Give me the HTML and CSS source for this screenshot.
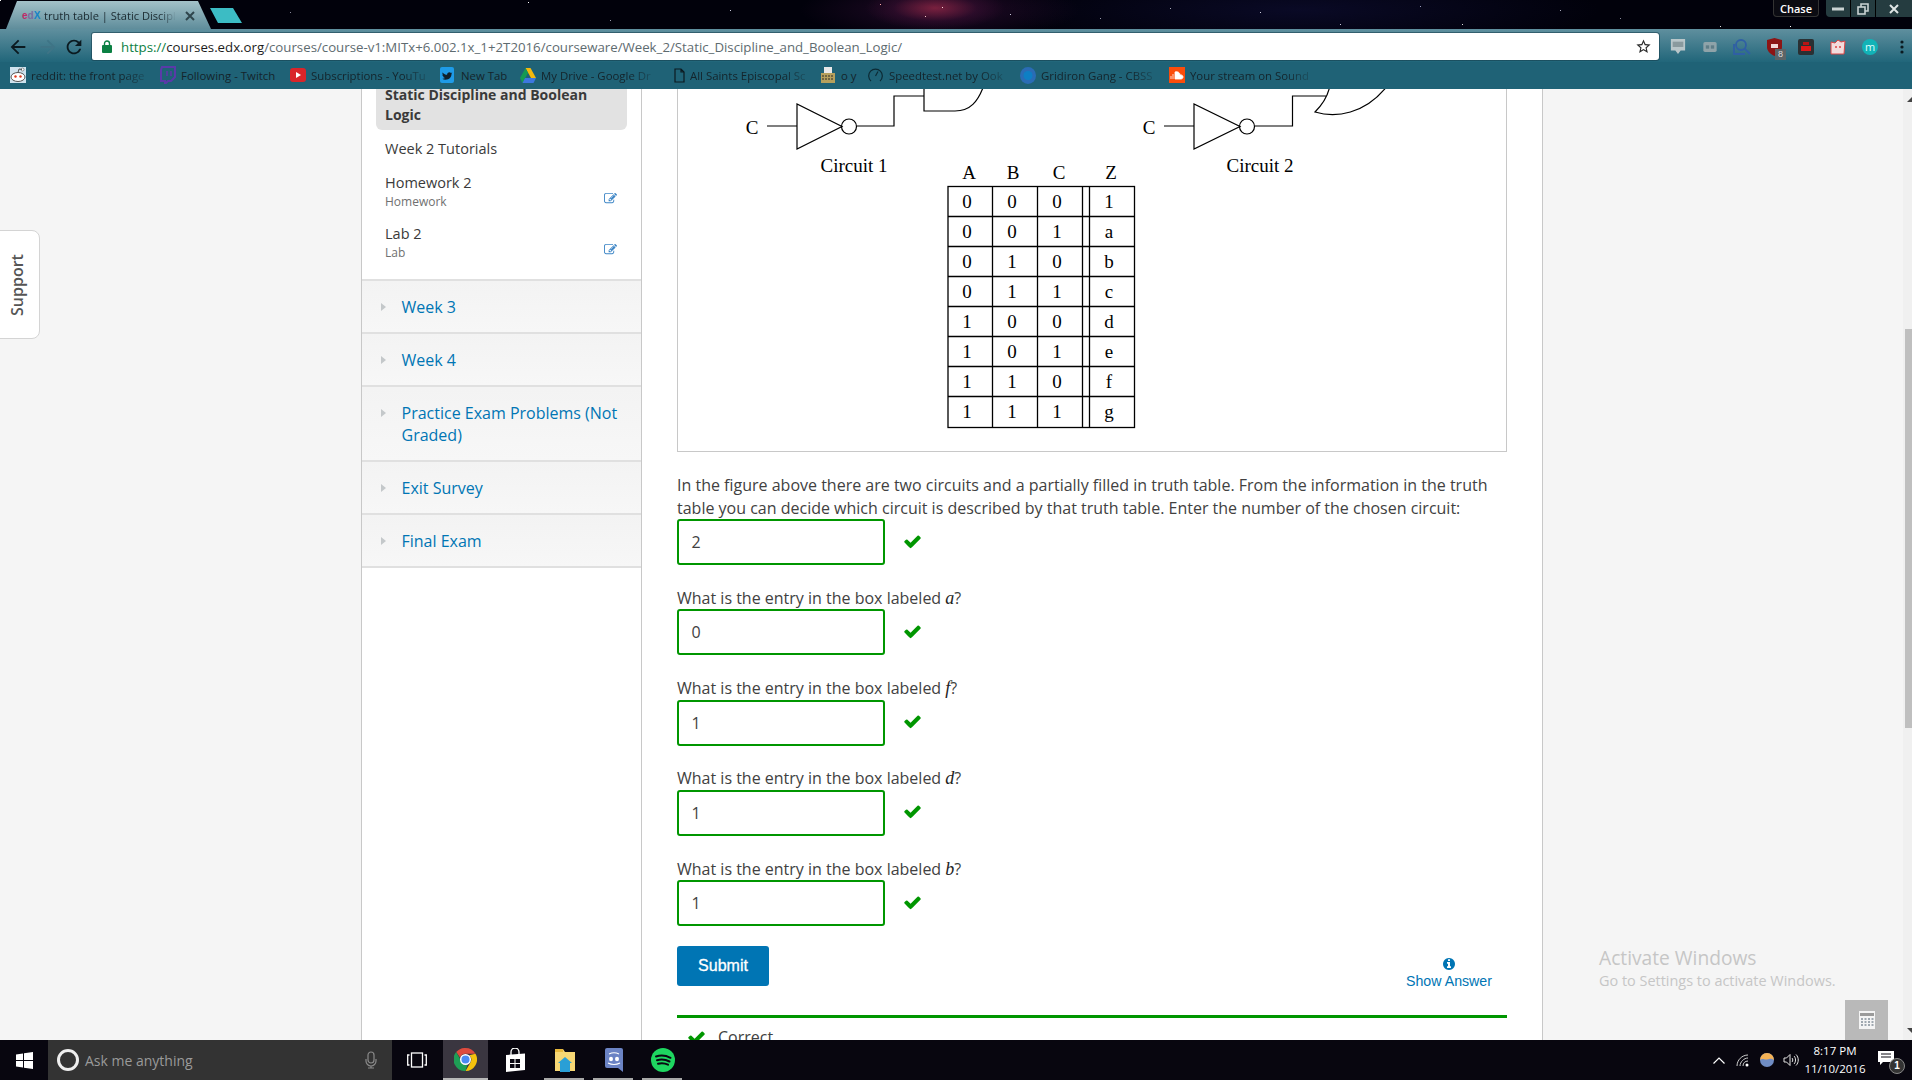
FILE: index.html
```html
<!DOCTYPE html>
<html lang="en">
<head>
<meta charset="utf-8">
<title>truth table | Static Discipline and Boolean Logic</title>
<link rel="stylesheet" href="styles.css">
</head>
<body>
<svg class="defs" width="0" height="0" aria-hidden="true">
  <symbol id="i-check" viewBox="0 0 1792 1792"><path d="M1671 566q0 40-28 68l-724 724-136 136q-28 28-68 28t-68-28l-136-136-362-362q-28-28-28-68t28-68l136-136q28-28 68-28t68 28l294 295 656-657q28-28 68-28t68 28l136 136q28 28 28 68z"/></symbol>
  <symbol id="i-edit" viewBox="0 0 1792 1792"><path d="M888 1184l116-116-152-152-116 116v56h96v96h56zm440-720q-16-16-33 1l-350 350q-17 17-1 33t33-1l350-350q17-17 1-33zm80 594v190q0 119-84.5 203.5t-203.5 84.5h-832q-119 0-203.5-84.5t-84.5-203.5v-832q0-119 84.5-203.5t203.5-84.5h832q63 0 117 25 15 7 18 23 3 17-9 29l-49 49q-14 14-32 8-23-6-45-6h-832q-66 0-113 47t-47 113v832q0 66 47 113t113 47h832q66 0 113-47t47-113v-126q0-13 9-22l64-64q15-15 35-7t20 29zm-96-738l288 288-672 672h-288v-288zm444 132l-92 92-288-288 92-92q28-28 68-28t68 28l152 152q28 28 28 68t-28 68z"/></symbol>
</svg>

<div class="app">
  <header class="chrome">
    <div class="titlebar">
      <div class="stars"></div>
      <div class="tab">
        <span class="favicon"><span class="fav-e">e</span><span class="fav-d">d</span><span class="fav-x">X</span></span>
        <span class="tab-title">truth table | Static Discipl</span>
        <svg class="tab-close" width="10" height="10" viewBox="0 0 10 10" stroke="#2f454c" stroke-width="2"><path d="M1 1l8 8M9 1l-8 8"/></svg>
      </div>
      <div class="newtab"></div>
      <div class="window-controls">
        <span class="user-chip">Chase</span>
        <span class="win-btn win-min"><svg width="12" height="4" viewBox="0 0 12 4"><rect width="12" height="3" y="0.5" fill="#c9d2d2"/></svg></span>
        <span class="win-btn win-max"><svg width="12" height="12" viewBox="0 0 12 12" fill="none" stroke="#c9d2d2" stroke-width="1.6"><rect x="1" y="4" width="7" height="7"/><path d="M4 4V1h7v7H8"/></svg></span>
        <span class="win-btn win-close"><svg width="10" height="10" viewBox="0 0 10 10" stroke="#dfe5e5" stroke-width="2"><path d="M1 1l8 8M9 1l-8 8"/></svg></span>
      </div>
    </div>

    <div class="toolbar">
      <span class="nav-btn nav-back"><svg width="22" height="22" viewBox="0 0 24 24" fill="#0b1a20"><path d="M20 11H7.83l5.59-5.59L12 4l-8 8 8 8 1.41-1.41L7.83 13H20v-2z"/></svg></span>
      <span class="nav-btn nav-fwd"><svg width="22" height="22" viewBox="0 0 24 24" fill="#3f7486"><path d="M4 11h12.17l-5.59-5.59L12 4l8 8-8 8-1.41-1.41L16.17 13H4v-2z"/></svg></span>
      <span class="nav-btn nav-reload"><svg width="22" height="22" viewBox="0 0 24 24" fill="#0b1a20"><path d="M17.65 6.35A7.958 7.958 0 0 0 12 4c-4.42 0-7.99 3.58-7.99 8s3.57 8 7.99 8c3.73 0 6.84-2.55 7.73-6h-2.08A5.99 5.99 0 0 1 12 18c-3.31 0-6-2.69-6-6s2.69-6 6-6c1.66 0 3.14.69 4.22 1.78L13 11h7V4l-2.35 2.35z"/></svg></span>
      <div class="omnibox">
        <svg class="lock" width="10" height="13" viewBox="0 0 10 13"><path d="M2.5 5V3.5a2.5 2.5 0 0 1 5 0V5" fill="none" stroke="#0b8043" stroke-width="1.4"/><rect y="5" width="10" height="8" rx="1" fill="#0b8043"/></svg>
        <span class="url"><span class="url-https">https://</span><span class="url-host">courses.edx.org</span><span class="url-path">/courses/course-v1:MITx+6.002.1x_1+2T2016/courseware/Week_2/Static_Discipline_and_Boolean_Logic/</span></span>
        <svg class="star" width="17" height="17" viewBox="0 0 24 24" fill="#2a2a2a"><path d="M22 9.24l-7.19-.62L12 2 9.19 8.63 2 9.24l5.46 4.73L5.82 21 12 17.27 18.18 21l-1.63-7.03L22 9.24zM12 15.4l-3.76 2.27 1-4.28-3.32-2.88 4.38-.38L12 6.1l1.71 4.04 4.38.38-3.32 2.88 1 4.28L12 15.4z"/></svg>
      </div>
      <div class="extensions">
        <span class="ext"><svg width="16" height="18" viewBox="0 0 18 20"><path d="M1 1h16v13h-5l-3 4-3-4H1z" fill="#b9c6c9"/><rect x="3" y="4" width="12" height="6" fill="#8a9a9e"/></svg></span>
        <span class="ext"><svg width="14" height="10" viewBox="0 0 16 12"><rect width="16" height="12" rx="2" fill="#8fa3a9"/><rect x="3" y="4" width="4" height="4" fill="#5f7d87"/><rect x="9" y="4" width="4" height="4" fill="#5f7d87"/></svg></span>
        <span class="ext"><svg width="18" height="18" viewBox="0 0 18 18" fill="none" stroke="#2f5fa5" stroke-width="1.8"><circle cx="8" cy="7" r="5"/><path d="M11.5 10.5L17 16M1 6v10h11"/></svg></span>
        <span class="ext ext-ublock"><svg width="15" height="18" viewBox="0 0 15 18"><path d="M0 2l7.5-2L15 2v7c0 4-3 7-7.5 9C3 16 0 13 0 9z" fill="#8c1515"/><rect x="4" y="6" width="7" height="4" fill="#f1d7d7"/></svg><span class="ext-badge">8</span></span>
        <span class="ext"><svg width="16" height="16" viewBox="0 0 16 16"><rect width="16" height="16" rx="2" fill="#2a3033"/><rect x="3" y="7" width="10" height="5" fill="#e01818"/><rect x="5" y="3" width="6" height="3" fill="#b81414"/></svg></span>
        <span class="ext"><svg width="16" height="16" viewBox="0 0 16 16"><path d="M1 3l4 1 3-3 3 2 4-1-1 13-13 0z" fill="#f3dcdc" stroke="#d44" stroke-width="1"/><circle cx="6" cy="8" r="1" fill="#d44"/><circle cx="10" cy="8" r="1" fill="#d44"/></svg></span>
        <span class="ext"><span class="ext-m">m</span></span>
        <span class="ext ext-last"><svg width="4" height="14" viewBox="0 0 4 14" fill="#0b1a20"><circle cx="2" cy="2" r="1.6"/><circle cx="2" cy="7" r="1.6"/><circle cx="2" cy="12" r="1.6"/></svg></span>
      </div>
    </div>

    <nav class="bookmarks">
      <span class="bm"><svg width="16" height="16" viewBox="0 0 16 16"><rect width="16" height="16" fill="#cfe3ee"/><ellipse cx="8" cy="10" rx="7" ry="4.5" fill="#fff" stroke="#555"/><circle cx="5.5" cy="9.5" r="1.2" fill="#e03a1e"/><circle cx="10.5" cy="9.5" r="1.2" fill="#e03a1e"/><circle cx="12.5" cy="2.5" r="1.5" fill="#fff" stroke="#555" stroke-width=".6"/><path d="M8 5.5L9 2l3 .5" fill="none" stroke="#555"/></svg><span class="bm-label bm-fade">reddit: the front page</span></span>
      <span class="bm"><svg width="16" height="18" viewBox="0 0 16 18"><path d="M2 1h13v10l-4 4H8l-3 3v-3H1V4z" fill="none" stroke="#5a3aa8" stroke-width="2"/><path d="M7 5v5M11 5v5" stroke="#5a3aa8" stroke-width="1.6"/></svg><span class="bm-label">Following - Twitch</span></span>
      <span class="bm"><svg width="16" height="14" viewBox="0 0 16 14"><rect width="16" height="14" rx="3" fill="#d9252a"/><path d="M6 4l5 3-5 3z" fill="#fff"/></svg><span class="bm-label bm-fade">Subscriptions - YouTu</span></span>
      <span class="bm"><svg width="16" height="16" viewBox="0 0 16 16"><rect width="14" height="16" rx="2" fill="#1e9be8"/><path d="M2.5 5.5c1.5 1.5 3 2.3 4.6 2.3C7 5.6 9.500 4.500 11 6l1.300-.5-.8 1.300c.2 3-2.200 6-6 6-1.300 0-2.400-.4-3.200-1 1 .1 2-.2 2.800-.8-1-.1-1.700-.7-2-1.500l.9-.1C2.900 9.300 2.300 8.500 2.300 7.500l.9.2C2.500 7.100 2.200 6.300 2.500 5.500z" fill="#10202c"/></svg><span class="bm-label">New Tab</span></span>
      <span class="bm"><svg width="16" height="15" viewBox="0 0 16 15"><path d="M5.500 0h5l5.500 10h-5z" fill="#f5b90d"/><path d="M5.500 0L0 10l2.500 5 5.500-10z" fill="#159a53"/><path d="M2.500 15h11l2.500-5H5z" fill="#3d77e0"/></svg><span class="bm-label bm-fade">My Drive - Google Dr</span></span>
      <span class="bm"><svg width="14" height="15" viewBox="-3 0 14 15" fill="none" stroke="#0c1a20" stroke-width="1.200"><path d="M1 1h6l3 3v10H1zM7 1v3h3"/></svg><span class="bm-label bm-fade">All Saints Episcopal Sc</span></span>
      <span class="bm"><svg width="16" height="16" viewBox="0 0 16 16"><rect x="4" y="0" width="8" height="6" fill="#e8e8e8"/><rect x="1" y="6" width="14" height="10" fill="#b6a05c"/><path d="M2 9h12M2 12h12" stroke="#2a2a2a" stroke-dasharray="2 1"/></svg><span class="bm-label">o y</span></span>
      <span class="bm"><svg width="16" height="15" viewBox="0 0 16 15" fill="none" stroke="#0c2a34" stroke-width="1.200"><path d="M3 13A6.800 6.800 0 1 1 12 13"/><path d="M7.500 8L10 3.500"/></svg><span class="bm-label bm-fade">Speedtest.net by Ook</span></span>
      <span class="bm"><svg width="16" height="17" viewBox="0 0 16 17"><ellipse cx="8" cy="8.500" rx="8" ry="8.500" fill="#2a6cb5"/><circle cx="8" cy="8.500" r="4.500" fill="#0e7fc4"/></svg><span class="bm-label bm-fade">Gridiron Gang - CBSS</span></span>
      <span class="bm"><svg width="16" height="16" viewBox="0 0 16 16"><rect width="16" height="16" fill="#fb4d0b"/><path d="M2 12V9M4 12V7M6 12V5c3-1 5 1 5 3 2-.5 3 .8 3 2s-1 2-2 2z" stroke="#fff" fill="#fff" stroke-width=".8"/></svg><span class="bm-label bm-fade">Your stream on Sound</span></span>
    </nav>
  </header>

  <div class="page">
    <div class="gutter-left"></div>

    <aside class="sidebar">
      <div class="subnav">
        <div class="sub-item sub-active">Static Discipline and Boolean Logic</div>
        <div class="sub-item sub-plain">Week 2 Tutorials</div>
        <div class="sub-item sub-graded">
          <div><div>Homework 2</div><div class="sub-note">Homework</div></div>
          <svg class="edit-icon" width="13" height="13"><use href="#i-edit"/></svg>
        </div>
        <div class="sub-item sub-graded">
          <div><div>Lab 2</div><div class="sub-note">Lab</div></div>
          <svg class="edit-icon" width="13" height="13"><use href="#i-edit"/></svg>
        </div>
      </div>
      <div class="chapter"><span class="chapter-arrow"></span><a class="chapter-link">Week 3</a></div>
      <div class="chapter"><span class="chapter-arrow"></span><a class="chapter-link">Week 4</a></div>
      <div class="chapter"><span class="chapter-arrow"></span><a class="chapter-link">Practice Exam Problems (Not Graded)</a></div>
      <div class="chapter"><span class="chapter-arrow"></span><a class="chapter-link">Exit Survey</a></div>
      <div class="chapter"><span class="chapter-arrow"></span><a class="chapter-link">Final Exam</a></div>
    </aside>

    <main class="content">
      <figure class="figure">
        <svg class="circuit" width="828" height="362" viewBox="678 89 828 362">
          <g class="wires">
            <path d="M767 126H797M797 104V149L842 126.500ZM857 126H894V96H924M924 85V111H955C970 111 978 102 984 85"/>
            <circle cx="849" cy="126.500" r="7.500"/>
            <path d="M1164 126H1194M1194 104V149L1240 126.500ZM1255 126H1292.500V96H1326M1330 85C1328 97 1322 105 1315 112C1335 118 1365 115 1388 85"/>
            <circle cx="1247" cy="126.500" r="7.500"/>
          </g>
          <g class="fig-label">
            <text x="752" y="134" text-anchor="middle">C</text>
            <text x="1149" y="134" text-anchor="middle">C</text>
            <text x="854" y="172" text-anchor="middle">Circuit 1</text>
            <text x="1260" y="172" text-anchor="middle">Circuit 2</text>
            <text x="969" y="179" text-anchor="middle">A</text>
            <text x="1013" y="179" text-anchor="middle">B</text>
            <text x="1059" y="179" text-anchor="middle">C</text>
            <text x="1111" y="179" text-anchor="middle">Z</text>
          </g>
          <g class="grid-lines">
            <rect x="948" y="186.500" width="186.500" height="241"/>
            <path d="M948 216.500H1134.500M948 246.500H1134.500M948 276.500H1134.500M948 306.500H1134.500M948 336.500H1134.500M948 366.500H1134.500M948 396.500H1134.500M992.500 186.500V427.500M1037.500 186.500V427.500M1082.500 186.500V427.500M1089.500 186.500V427.500"/>
          </g>
          <g class="fig-label">
            <text x="967" y="208" text-anchor="middle">0</text><text x="1012" y="208" text-anchor="middle">0</text><text x="1057" y="208" text-anchor="middle">0</text><text x="1109" y="208" text-anchor="middle">1</text>
            <text x="967" y="238" text-anchor="middle">0</text><text x="1012" y="238" text-anchor="middle">0</text><text x="1057" y="238" text-anchor="middle">1</text><text x="1109" y="238" text-anchor="middle">a</text>
            <text x="967" y="268" text-anchor="middle">0</text><text x="1012" y="268" text-anchor="middle">1</text><text x="1057" y="268" text-anchor="middle">0</text><text x="1109" y="268" text-anchor="middle">b</text>
            <text x="967" y="298" text-anchor="middle">0</text><text x="1012" y="298" text-anchor="middle">1</text><text x="1057" y="298" text-anchor="middle">1</text><text x="1109" y="298" text-anchor="middle">c</text>
            <text x="967" y="328" text-anchor="middle">1</text><text x="1012" y="328" text-anchor="middle">0</text><text x="1057" y="328" text-anchor="middle">0</text><text x="1109" y="328" text-anchor="middle">d</text>
            <text x="967" y="358" text-anchor="middle">1</text><text x="1012" y="358" text-anchor="middle">0</text><text x="1057" y="358" text-anchor="middle">1</text><text x="1109" y="358" text-anchor="middle">e</text>
            <text x="967" y="388" text-anchor="middle">1</text><text x="1012" y="388" text-anchor="middle">1</text><text x="1057" y="388" text-anchor="middle">0</text><text x="1109" y="388" text-anchor="middle">f</text>
            <text x="967" y="418" text-anchor="middle">1</text><text x="1012" y="418" text-anchor="middle">1</text><text x="1057" y="418" text-anchor="middle">1</text><text x="1109" y="418" text-anchor="middle">g</text>
          </g>
        </svg>
      </figure>

      <div class="question">
        <p class="prompt">In the figure above there are two circuits and a partially filled in truth table. From the information in the truth table you can decide which circuit is described by that truth table. Enter the number of the chosen circuit:</p>
        <div class="answer-row"><div class="answer">2</div><svg class="check" width="19" height="19"><use href="#i-check"/></svg></div>
      </div>
      <div class="question">
        <p class="prompt">What is the entry in the box labeled <i class="math">a</i>?</p>
        <div class="answer-row"><div class="answer">0</div><svg class="check" width="19" height="19"><use href="#i-check"/></svg></div>
      </div>
      <div class="question">
        <p class="prompt">What is the entry in the box labeled <i class="math">f</i>?</p>
        <div class="answer-row"><div class="answer">1</div><svg class="check" width="19" height="19"><use href="#i-check"/></svg></div>
      </div>
      <div class="question">
        <p class="prompt">What is the entry in the box labeled <i class="math">d</i>?</p>
        <div class="answer-row"><div class="answer">1</div><svg class="check" width="19" height="19"><use href="#i-check"/></svg></div>
      </div>
      <div class="question question-last">
        <p class="prompt">What is the entry in the box labeled <i class="math">b</i>?</p>
        <div class="answer-row"><div class="answer">1</div><svg class="check" width="19" height="19"><use href="#i-check"/></svg></div>
      </div>

      <div class="actions">
        <button class="submit">Submit</button>
        <a class="show-answer">
          <svg class="info" width="14" height="14" viewBox="0 0 1792 1792"><path d="M1152 1376v-160q0-14-9-23t-23-9h-96v-512q0-14-9-23t-23-9h-320q-14 0-23 9t-9 23v160q0 14 9 23t23 9h96v320h-96q-14 0-23 9t-9 23v160q0 14 9 23t23 9h448q14 0 23-9t9-23zm-128-896v-160q0-14-9-23t-23-9h-192q-14 0-23 9t-9 23v160q0 14 9 23t23 9h192q14 0 23-9t9-23zm640 416q0 209-103 385.500t-279.500 279.500-385.500 103-385.500-103-279.500-279.500-103-385.500 103-385.500 279.500-279.500 385.500-103 385.500 103 279.500 279.500 103 385.500z"/></svg>
          <span>Show Answer</span>
        </a>
      </div>

      <div class="notification">
        <svg class="check" width="19" height="19"><use href="#i-check"/></svg>
        <span>Correct</span>
      </div>
    </main>

    <div class="gutter-right">
      <div class="scrollbar">
        <span class="scroll-up"></span>
        <span class="scroll-thumb"></span>
        <span class="scroll-down"></span>
      </div>
    </div>

    <button class="support-tab"><span>Support</span></button>
    <div class="watermark">
      <div class="wm-title">Activate Windows</div>
      <div class="wm-sub">Go to Settings to activate Windows.</div>
    </div>
    <div class="calc-widget">
      <svg width="16" height="18" viewBox="0 0 16 18"><rect width="16" height="18" fill="#f4f4f4"/><rect x="1" y="2" width="14" height="3" fill="#9a9a9a"/><path d="M2 8h2M5.500 8h2M9 8h2M12.500 8h2M2 11h2M5.500 11h2M9 11h2M12.500 11h2M2 14h2M5.500 14h2M9 14h2M12.500 14h2" stroke="#9fa8b0" stroke-width="2"/></svg>
    </div>
  </div>

  <footer class="taskbar">
    <span class="start"><svg width="17" height="17" viewBox="0 0 17 17" fill="#fff"><path d="M0 2.500l7-1V8H0zM8 1.300L17 0v8H8zM0 9h7v6.500l-7-1zM8 9h9v8l-9-1.300z"/></svg></span>
    <div class="search">
      <span class="cortana"></span>
      <span class="search-text">Ask me anything</span>
      <svg class="mic" width="12" height="18" viewBox="0 0 12 18" fill="none" stroke="#8a8a8a" stroke-width="1.200"><rect x="3" y="1" width="6" height="11" rx="3"/><path d="M1 8v2a5 5 0 0 0 10 0V8M6 15v2M3 17h6"/></svg>
    </div>
    <span class="taskview"><svg width="20" height="16" viewBox="0 0 20 16" fill="none" stroke="#fff" stroke-width="1.300"><rect x="4.500" y="1" width="11" height="14"/><path d="M2.500 3H.7v10h1.800M17.500 3h1.800v10h-1.800"/></svg></span>
    <span class="task task-chrome"><svg width="23" height="23" viewBox="0 0 24 24"><path d="M12 0a12 12 0 0 1 10.400 6H12a6 6 0 0 0-5.700 4L2.300 4.300A12 12 0 0 1 12 0z" fill="#dd4b3e"/><path d="M22.400 6A12 12 0 0 1 12 24l5.200-9A6 6 0 0 0 16 7.500z" fill="#f4c20d"/><path d="M12 24A12 12 0 0 1 2.300 4.300L7.500 13.500A6 6 0 0 0 14 17.600z" fill="#1e9e55"/><circle cx="12" cy="12" r="5" fill="#4a8af4" stroke="#fff" stroke-width="1.500"/></svg></span>
    <span class="task task-store"><svg width="21" height="24" viewBox="0 0 21 24"><path d="M1 7l19-1.500V22L1 24z" fill="#fff"/><path d="M6 7V4a4 4 0 0 1 8 0v3" fill="none" stroke="#fff" stroke-width="1.300"/><path d="M5 11h4.500v4H5zM10.500 11H15v4h-4.500zM5 16h4.500v4H5zM10.500 16H15v4h-4.500z" fill="#0a0812"/></svg></span>
    <span class="task task-open"><svg width="22" height="24" viewBox="0 0 22 24"><path d="M1 1h8l2 3h10v19H1z" fill="#f7d774"/><path d="M1 1h8v3H1z" fill="#e8b83c"/><rect x="6" y="15" width="10" height="9" fill="#2a9fd6"/><path d="M4 15l7-6 7 6z" fill="#2a9fd6"/></svg></span>
    <span class="task task-open"><svg width="18" height="24" viewBox="0 0 18 24"><path d="M2 0h14a2 2 0 0 1 2 2v22l-5-4H2a2 2 0 0 1-2-2V2a2 2 0 0 1 2-2z" fill="#6b83c4"/><ellipse cx="6" cy="11" rx="2" ry="2.200" fill="#fff"/><ellipse cx="12" cy="11" rx="2" ry="2.200" fill="#fff"/><path d="M3 15c4 2 8 2 12 0" fill="none" stroke="#fff" stroke-width="1.200"/><path d="M4 6c3-1.500 7-1.500 10 0" fill="none" stroke="#fff" stroke-width="1.200"/></svg></span>
    <span class="task task-open"><svg width="24" height="24" viewBox="0 0 24 24"><circle cx="12" cy="12" r="12" fill="#1ed760"/><path d="M5 8.500c5-1.500 10-1 14.500 1.300M6 12.200c4.500-1.200 8.500-.8 12.500 1.300M7 15.700c3.500-1 7-.6 10 1" fill="none" stroke="#0a0812" stroke-width="2" stroke-linecap="round"/></svg></span>

    <div class="tray">
      <span class="tray-icon"><svg width="12" height="7" viewBox="0 0 12 7" fill="none" stroke="#fff" stroke-width="1.200"><path d="M.5 6.500L6 1l5.500 5.500"/></svg></span>
      <span class="tray-icon"><svg width="14" height="13" viewBox="0 0 14 13" fill="none" stroke="#cfcfcf"><path d="M1 12C1 6 6 1 12 1M4 12c0-4 4-8 8-8M7 12c0-3 2-5 5-5"/><circle cx="11" cy="11" r="1.500" fill="#fff" stroke="none"/></svg></span>
      <span class="tray-icon"><svg width="14" height="14" viewBox="0 0 14 14"><circle cx="7" cy="7" r="7" fill="#6f8cc4"/><path d="M0 7a7 7 0 0 1 14 0c-3-2-4-1-7-.5S3 5 0 7z" fill="#f5b255"/></svg></span>
      <span class="tray-icon"><svg width="16" height="14" viewBox="0 0 16 14" fill="none" stroke="#e4e4e4"><path d="M1 5h2.500L7 1.500v11L3.500 9H1z"/><path d="M9 5c1 1 1 3 0 4M11 3c2 2 2 6 0 8M13 1.500c3 3 3 8 0 11"/></svg></span>
      <div class="clock"><div>8:17 PM</div><div>11/10/2016</div></div>
      <span class="action-center"><svg width="16" height="14" viewBox="0 0 16 14"><path d="M0 0h16v11H5l-3 3v-3H0z" fill="#fff"/><path d="M3 3h10M3 6h10" stroke="#0a0812"/></svg><span class="action-badge">1</span></span>
    </div>
  </footer>
</div>
</body>
</html>
```

FILE: styles.css
```css
* { box-sizing: border-box; }
html, body { margin: 0; height: 100%; overflow: hidden; }
body { font-family: "Open Sans", "Noto Sans", sans-serif; color: #414141; }
.defs { position: absolute; }

.app { display: flex; flex-direction: column; height: 1080px; width: 1912px; }

/* Browser chrome */
.chrome { flex: none; height: 89px; display: flex; flex-direction: column; background: #1f6276; border-bottom: 1px solid #b9c4c6; }

.titlebar {
  position: relative; height: 29px; flex: none; overflow: hidden; display: flex;
  background:
    radial-gradient(ellipse 70px 22px at 935px 8px, rgba(150, 40, 70, .75), rgba(80, 20, 60, .3) 60%, transparent),
    radial-gradient(ellipse 140px 30px at 940px 10px, rgba(70, 20, 70, .5), transparent),
    radial-gradient(ellipse 300px 40px at 1300px 10px, rgba(20, 20, 70, .45), transparent),
    #01010b;
}
.stars {
  position: absolute; left: 0; top: 0; width: 1px; height: 1px; background: #fff;
  box-shadow: 290px 12px #889, 528px 2px #fff, 610px 20px #99a, 730px 10px #ccd, 880px 4px #faa, 925px 16px #fcc, 942px 7px #fdd, 1010px 14px #ccd, 1100px 18px #99a, 1170px 8px #aab, 1260px 12px #ccd, 1340px 24px #ccd, 1420px 6px #99b, 1462px 24px #ddd, 1560px 10px #aab, 1620px 18px #889, 1720px 26px #ddd, 1790px 26px #fff;
}
.tab {
  position: relative; margin: 1px 0 0 6px; width: 205px; height: 28px; display: flex; align-items: center;
  padding: 1px 18px 0 16px;
  background: linear-gradient(#a3c1c8, #5f8d9b);
  clip-path: polygon(0 100%, 11px 0, 192px 0, 205px 100%);
  font-size: 11.100px; color: #1b2a30;
}
.favicon { width: 22px; font: bold 10px "Liberation Sans", sans-serif; flex: none; }
.fav-e { color: #c02a68; }
.fav-d { color: #7a6aa0; }
.fav-x { color: #1683c8; }
.tab-title { flex: 1; white-space: nowrap; -webkit-mask-image: linear-gradient(to right, #000 88%, transparent); mask-image: linear-gradient(to right, #000 88%, transparent); }
.tab-close { flex: none; margin-left: 9px; }
.newtab { margin: 8px 0 0 -1px; width: 32px; height: 15px; background: #3cbcc4; clip-path: polygon(0 0, 23px 0, 100% 100%, 8px 100%); }

.window-controls { margin-left: auto; display: flex; align-items: flex-start; height: 17px; }
.user-chip { width: 46px; height: 17px; margin-right: 7px; display: flex; align-items: center; justify-content: center; font: 600 11px/1 "Open Sans", sans-serif; color: #fff; background: #0b0b12; border: 1px solid #333; border-top: 0; border-radius: 0 0 4px 4px; }
.win-btn { height: 17px; display: flex; align-items: center; justify-content: center; background: #253c40; border-right: 1px solid #000; }
.win-min { width: 25px; border-radius: 0 0 0 4px; }
.win-max { width: 25px; }
.win-close { width: 36px; border-right: 0; }

.toolbar { height: 33px; flex: none; display: flex; align-items: flex-start; padding-top: 4px; background: linear-gradient(#5f8f9e, #21667a); }
.nav-btn { width: 30px; height: 27px; display: flex; align-items: center; justify-content: center; flex: none; }
.nav-back { margin-left: 3px; }
.nav-reload { width: 22px; margin-left: 0; margin-right: 7px; }
.omnibox { width: 1567px; height: 27px; flex: none; display: flex; align-items: center; padding: 0 7px 0 10px; background: #fff; border-radius: 2px 3px 3px 2px; box-shadow: 0 0 0 1px rgba(20, 60, 75, .55); }
.lock { flex: none; margin-right: 9px; }
.url { flex: 1; white-space: nowrap; font-size: 13.250px; color: #5e6b70; }
.url-https { color: #0b8043; }
.url-host { color: #1c1c1c; }
.star { flex: none; }
.extensions { display: flex; margin-left: 3px; }
.ext { position: relative; width: 32px; height: 27px; display: flex; align-items: center; justify-content: center; }
.ext-last { width: 26px; padding-left: 6px; }
.ext-badge { position: absolute; left: 17px; top: 16px; width: 11px; height: 11px; background: #5b6468; color: #ddd; font: 9px/11px "Liberation Sans", sans-serif; text-align: center; }
.ext-m { width: 16px; height: 16px; border-radius: 50%; background: #12b3b7; color: #dff; font: 11px/15px "Open Sans", sans-serif; text-align: center; }

.bookmarks { height: 27px; flex: none; display: grid; grid-template-columns: 150px 130px 150px 80px 151px 149px 48px 152px 149px 150px; padding-left: 10px; padding-bottom: 1px; align-items: center; font-size: 11.400px; color: #14242b; background: #1f6276; }
.bm { display: flex; align-items: center; gap: 5px; white-space: nowrap; }
.bm svg { flex: none; }
.bm-fade { -webkit-mask-image: linear-gradient(to right, #000 80%, rgba(0, 0, 0, .3)); mask-image: linear-gradient(to right, #000 80%, rgba(0, 0, 0, .3)); }

/* Page */
.page { position: relative; flex: 1; min-height: 0; display: flex; overflow: hidden; background: #f5f5f5; }
.gutter-left { width: 361px; flex: none; }

.sidebar { width: 281px; flex: none; background: #fff; border-left: 1px solid #c8c8c8; border-right: 1px solid #c8c8c8; }
.subnav { height: 194px; padding: 0 14px; }
.sub-item { font-size: 14.500px; line-height: 20px; color: #3a3a3a; padding: 0 9px; }
.sub-active { margin-top: -4px; padding-bottom: 5px; background: #e2e2e2; border-radius: 0 0 6px 6px; font-size: 14px; font-weight: 700; }
.sub-plain { padding-top: 9px; padding-bottom: 9px; }
.sub-graded { display: flex; justify-content: space-between; align-items: flex-end; padding-top: 15px; padding-bottom: 8px; height: 51px; }
.sub-note { font-size: 12px; line-height: 18px; color: #707070; }
.edit-icon { fill: #3e86c6; margin: 0 1px 6px 0; }

.chapter { position: relative; padding: 14.500px 18px 14.100px 39.500px; font-size: 16px; line-height: 22.400px; background: linear-gradient(#f3f3f3, #f7f7f7); border-top: 2px solid #e0e0e0; }
.chapter:last-child { border-bottom: 2px solid #e0e0e0; }
.chapter-link { color: #0075b4; }
.chapter-arrow { position: absolute; left: 19px; top: 22px; border-left: 5px solid #c4c8ca; border-top: 4px solid transparent; border-bottom: 4px solid transparent; }

.content { width: 901px; flex: none; background: #fff; border-right: 1px solid #c8c8c8; padding: 0 35px; }
.figure { margin: 0; width: 830px; height: 363px; border: 1px solid #c8c8c8; border-top: 0; }
.circuit { display: block; }
.wires path, .wires circle { fill: none; stroke: #000; stroke-width: 1.200; }
.grid-lines rect, .grid-lines path { fill: none; stroke: #000; stroke-width: 1.300; }
.fig-label text { font: 19px "Liberation Serif", serif; fill: #000; }

.question { margin-bottom: 21.900px; }
.figure + .question { margin-top: 22.200px; }
.question-last { margin-bottom: 19.800px; }
.prompt { margin: 0; font-size: 16px; line-height: 22.400px; color: #414141; }
.math { font: italic 18px/1 "Liberation Serif", serif; color: #222; }
.answer-row { display: flex; align-items: center; gap: 18px; }
.answer { width: 208px; height: 46px; padding: 0 12.500px; border: 2px solid #009600; border-radius: 3px; font-size: 16px; line-height: 42px; color: #414141; }
.check { fill: #009600; flex: none; margin-bottom: 2px; }

.actions { display: flex; justify-content: space-between; align-items: flex-start; height: 40px; }
.submit { width: 92px; height: 40px; padding: 0; border: 0; border-radius: 3px; background: #0075b4; color: #fff; font: 16px "Liberation Sans", sans-serif; -webkit-text-stroke: .3px #fff; }
.show-answer { display: flex; flex-direction: column; align-items: center; width: 86px; margin: 11px 15px 0 0; color: #0075b4; font: 14.200px/20px "Liberation Sans", sans-serif; }
.info { fill: #0075b4; }

.notification { display: flex; gap: 12px; margin-top: 29px; padding: 8px 0 0 10px; border-top: 3px solid #009600; font-size: 16px; line-height: 22px; color: #414141; }
.notification .check { margin: 2px 0 0; }

.gutter-right { flex: 1; display: flex; justify-content: flex-end; }
.scrollbar { position: relative; width: 9px; height: 100%; background: #f0f0f0; }
.scroll-thumb { position: absolute; left: 2px; right: 0; top: 240px; height: 399px; background: #bfbfbf; }
.scroll-up, .scroll-down { position: absolute; right: 0; width: 0; height: 0; border-left: 5px solid transparent; }
.scroll-up { top: 8px; border-bottom: 5px solid #444; }
.scroll-down { bottom: 7px; border-top: 5px solid #444; }

.support-tab { position: absolute; left: -1px; top: 141px; width: 41px; height: 109px; padding: 0; display: flex; align-items: center; justify-content: center; background: #fff; border: 1px solid #d4d4d4; border-radius: 0 8px 8px 0; }
.support-tab span { display: block; transform: rotate(-90deg); font: 600 16px "Open Sans", sans-serif; color: #555; white-space: nowrap; margin-left: -6px; }

.watermark { position: absolute; left: 1599px; top: 857px; color: #c6c6c6; }
.wm-title { font-size: 19.200px; line-height: 24px; }
.wm-sub { font-size: 14.450px; line-height: 22px; }
.calc-widget { position: absolute; left: 1845px; top: 911px; width: 43px; height: 40px; display: flex; align-items: center; justify-content: center; background: #b9b9b9; }

/* Taskbar */
.taskbar { flex: none; height: 40px; display: flex; align-items: stretch; background: #08060f; color: #fff; }
.start { width: 48px; display: flex; align-items: center; justify-content: center; }
.search { width: 344px; display: flex; align-items: center; padding-left: 9px; background: #333; }
.cortana { width: 22px; height: 22px; border: 3px solid #eee; border-radius: 50%; flex: none; }
.search-text { margin-left: 6px; flex: 1; font-size: 14px; color: #9a9a9a; }
.mic { margin-right: 15px; }
.taskview { width: 51px; display: flex; align-items: center; justify-content: center; padding-right: 2px; }
.task { position: relative; width: 49px; display: flex; align-items: center; justify-content: center; }
.task-chrome { width: 45px; background: #3a3640; border-bottom: 2px solid #b8b8b8; }
.task-store { width: 48px; margin-right: 4px; padding-left: 6px; }
.task-open::after { content: ""; position: absolute; left: 4px; right: 5px; bottom: 0; height: 2px; background: #a8a8a8; }
.tray { margin-left: auto; display: flex; align-items: center; padding-right: 5px; }
.tray-icon { width: 24px; display: flex; justify-content: center; }
.clock { width: 64px; text-align: center; font-size: 11.500px; line-height: 18px; }
.action-center { position: relative; width: 40px; display: flex; justify-content: center; padding-right: 2px; margin-top: -4px; }
.action-badge { position: absolute; left: 22px; top: 7px; width: 16px; height: 16px; border-radius: 50%; background: #333; border: 1px solid #888; font: 700 10px/14px "Liberation Sans", sans-serif; text-align: center; color: #fff; }
```
